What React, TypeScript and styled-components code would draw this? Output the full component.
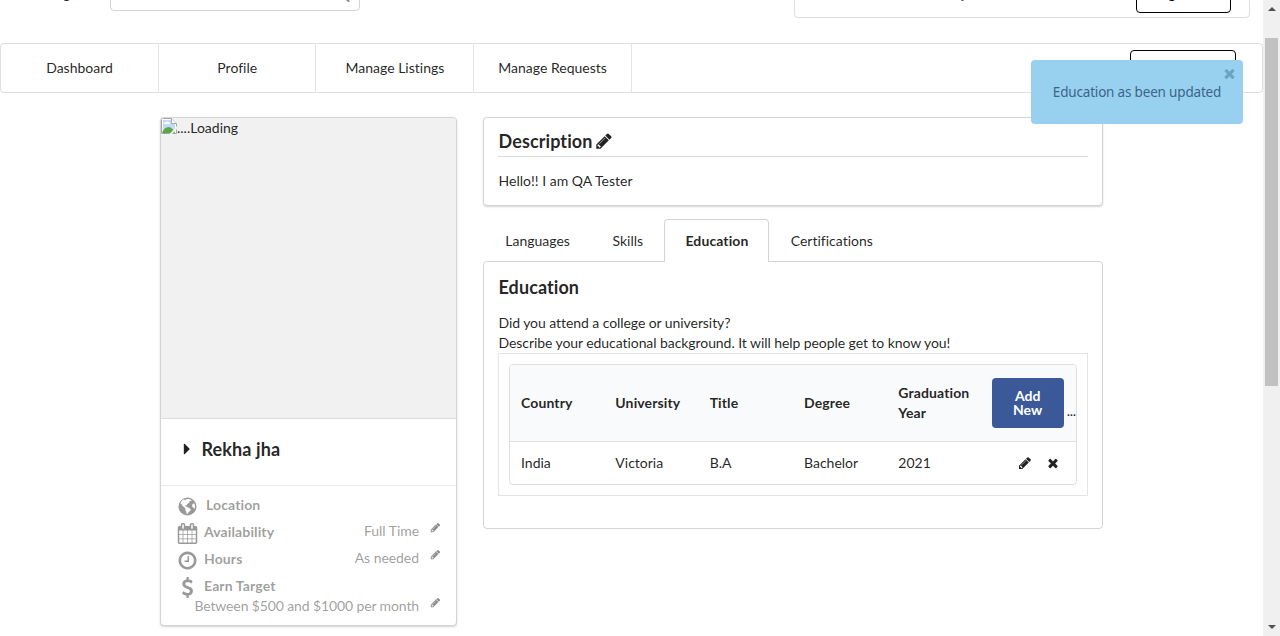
import React from 'react';
import styled, { createGlobalStyle, css } from 'styled-components';

const GlobalStyle = createGlobalStyle`
  *, *::before, *::after { box-sizing: border-box; }
  html, body { margin: 0; height: 100%; overflow: hidden; background: #fff; }
  body {
    font-family: Lato, "Liberation Sans", sans-serif;
    font-size: 14px;
    line-height: 20px;
    font-variant-ligatures: none;
    color: rgba(0, 0, 0, 0.87);
  }
`;

const paths = {
  pencil:
    'M491 1536l91-91-235-235-91 91v107h128v128h107zm523-928q0-22-22-22-10 0-17 7l-542 542q-7 7-7 17 0 22 22 22 10 0 17-7l542-542q7-7 7-17zm-54-192l416 416-832 832h-416v-416zm683 96q0 53-37 90l-166 166-416-416 166-165q36-38 90-38 53 0 91 38l235 234q37 39 37 91z',
  close:
    'M1490 1322q0 40-28 68l-136 136q-28 28-68 28t-68-28l-294-294-294 294q-28 28-68 28t-68-28l-136-136q-28-28-28-68t28-68l294-294-294-294q-28-28-28-68t28-68l136-136q28-28 68-28t68 28l294 294 294-294q28-28 68-28t68 28l136 136q28 28 28 68t-28 68l-294 294 294 294q28 28 28 68z',
  search:
    'M1216 832q0-185-131.5-316.5t-316.5-131.5-316.5 131.5-131.5 316.5 131.5 316.5 316.5 131.5 316.5-131.5 131.5-316.5zm512 832q0 52-38 90t-90 38q-54 0-90-38l-343-342q-179 124-399 124-143 0-273.5-55.5t-225-150-150-225-55.5-273.5 55.5-273.5 150-225 225-150 273.5-55.5 273.5 55.5 225 150 150 225 55.5 273.5q0 220-124 399l343 343q37 37 37 90z',
  calendar:
    'M192 1664h288v-288h-288v288zm352 0h320v-288h-320v288zm-352-352h288v-320h-288v320zm352 0h320v-320h-320v320zm-352-384h288v-288h-288v288zm736 736h320v-288h-320v288zm-384-736h320v-288h-320v288zm768 736h288v-288h-288v288zm-384-352h320v-320h-320v320zm-352-864v-288q0-13-9.5-22.5t-22.5-9.5h-64q-13 0-22.5 9.5t-9.5 22.5v288q0 13 9.5 22.5t22.5 9.5h64q13 0 22.5-9.5t9.5-22.5zm736 864h288v-320h-288v320zm-384-384h320v-288h-320v288zm384 0h288v-288h-288v288zm32-480v-288q0-13-9.5-22.5t-22.5-9.5h-64q-13 0-22.5 9.5t-9.5 22.5v288q0 13 9.5 22.5t22.5 9.5h64q13 0 22.5-9.5t9.5-22.5zm384-64v1280q0 52-38 90t-90 38h-1408q-52 0-90-38t-38-90v-1280q0-52 38-90t90-38h128v-96q0-66 47-113t113-47h64q66 0 113 47t47 113v96h384v-96q0-66 47-113t113-47h64q66 0 113 47t47 113v96h128q52 0 90 38t38 90z',
  clock:
    'M1024 544v448q0 14-9 23t-23 9h-320q-14 0-23-9t-9-23v-64q0-14 9-23t23-9h224v-352q0-14 9-23t23-9h64q14 0 23 9t9 23zm416 352q0-148-73-273t-198-198-273-73-273 73-198 198-73 273 73 273 198 198 273 73 273-73 198-198 73-273zm224 0q0 209-103 385.5t-279.5 279.5-385.5 103-385.5-103-279.5-279.5-103-385.5 103-385.5 279.5-279.5 385.5-103 385.5 103 279.5 279.5 103 385.5z',
  dollar:
    'M1362 1185q0 153-99.5 263.5t-258.5 136.5v175q0 14-9 23t-23 9h-135q-13 0-22.5-9.5t-9.5-22.5v-175q-66-9-127.5-31t-101.5-44.5-74-48-46.5-37.5-17.5-18q-17-21-2-41l103-135q7-10 23-12 15-2 24 9l2 2q113 99 243 125 37 8 74 8 81 0 142.5-43t61.5-122q0-28-15-53t-33.5-42-58.5-37.5-66-32-80-32.5q-39-16-61.5-25t-61.5-26.5-62.5-31-56.5-35.5-53.5-42.5-43.5-49-35.5-58-21-66.5-8.5-78q0-138 98-242t255-134v-180q0-13 9.5-22.5t22.5-9.5h135q14 0 23 9t9 23v176q57 6 110.5 23t87 33.5 63.5 37.5 39 29 15 14q17 18 5 38l-81 146q-8 15-23 16-14 3-27-7-3-3-14.5-12t-39-26.5-58.5-32-74.5-26-85.5-11.5q-95 0-155 43t-60 111q0 26 8.5 48t29.5 41.5 39.5 33 56 31 60.5 27 70 27.5q53 20 81 31.5t76 35 75.5 42.5 62 50 53 63.5 31.5 76.5 13 94z',
  caret:
    'M1152 896q0 26-19 45l-448 448q-19 19-45 19t-45-19-19-45v-896q0-26 19-45t45-19 45 19l448 448q19 19 19 45z',
  globe:
    'M896 128a768 768 0 1 0 0 1536a768 768 0 1 0 0-1536zM1010 250L1180 310L1260 400L1170 440L1110 400L1040 470L1100 540L1010 560L960 640L860 700L850 800L780 770L700 790L710 880L800 880L820 960L920 970L1080 1040L1180 1120L1130 1260L1010 1340L930 1460L900 1540L820 1520L790 1320L700 1200L720 1060L620 960L480 860L400 700L300 620L350 480L480 350L620 270L650 360L760 330L800 250ZM1330 700L1450 610L1530 760L1550 940L1480 1080L1400 1000L1320 940L1280 800Z',
};

type IconName = keyof typeof paths;

const Svg = styled.svg<{ $size: number }>`
  display: block;
  flex: none;
  width: ${(p) => p.$size}px;
  height: ${(p) => p.$size}px;
  fill: currentColor;
`;

const Icon = ({ name, size = 14 }: { name: IconName; size?: number }) => (
  <Svg viewBox="0 0 1792 1792" $size={size} aria-hidden="true">
    <path fillRule="evenodd" d={paths[name]} />
  </Svg>
);

const Screen = styled.div`
  position: relative;
  display: flex;
  width: 1280px;
  height: 636px;
  overflow: hidden;
`;

const Page = styled.div`
  flex: none;
  width: 1263px;
`;

const Header = styled.header`
  display: flex;
  align-items: flex-start;
  height: 43px;
  overflow: hidden;
`;

const Brand = styled.div`
  width: 110px;
  margin-top: -16px;
  padding-left: 14px;
`;

const SearchBox = styled.div`
  display: flex;
  justify-content: flex-end;
  width: 250px;
  height: 38px;
  margin-top: -27px;
  padding: 14px 9px 0 0;
  border: 1px solid rgba(34, 36, 38, 0.2);
  border-radius: 4px;
  color: #888;
`;

const AccountMenu = styled.div`
  display: flex;
  align-items: flex-end;
  justify-content: flex-end;
  width: 456px;
  height: 50px;
  margin: -32px 0 0 434px;
  padding: 0 18px 4px 0;
  border: 1px solid rgba(34, 36, 38, 0.15);
  border-radius: 4px;
`;

const Greeting = styled.span`
  margin: 0 156px 9px 0;
  color: #555;
`;

const OutlineButton = styled.button<{ $width: number }>`
  width: ${(p) => p.$width}px;
  height: 36px;
  padding: 0 0 2px 1px;
  border: 1px solid #000;
  border-radius: 4px;
  background: #fff;
  color: #000;
  font: 400 14px/14px Lato, sans-serif;
`;

const Nav = styled.nav`
  display: flex;
  height: 50px;
  border: 1px solid rgba(34, 36, 38, 0.15);
  border-radius: 4px;
`;

const NavItem = styled.a`
  display: flex;
  align-items: center;
  justify-content: center;
  width: 157.7px;
  padding-left: 0.4px;
  border-right: 1px solid rgba(34, 36, 38, 0.12);
`;

const NavAction = styled.div`
  margin: 6px 26px 0 auto;
`;

const Content = styled.main`
  display: flex;
  align-items: flex-start;
  gap: 26px;
  padding: 24px 0 0 160px;
`;

const panel = css`
  border: 1px solid #d4d4d5;
  border-radius: 4px;
  background: #fff;
`;

const ProfileCard = styled.aside`
  ${panel}
  width: 297px;
  height: 509px;
  overflow: hidden;
  box-shadow: 0 1px 2px 0 #d4d4d5;
`;

const Photo = styled.div`
  display: flex;
  align-items: flex-start;
  height: 301px;
  background: #f1f1f1;
  border-bottom: 1px solid #dcdcdd;
`;

const NameBar = styled.div`
  display: flex;
  align-items: center;
  gap: 6px;
  height: 67px;
  padding: 0 0 7px 16.5px;
  border-bottom: 1px solid #ebebeb;
  font-size: 18px;
  font-weight: 700;
  letter-spacing: 0.1px;
`;

const Details = styled.div`
  padding: 7px 15px 0 16px;
  color: rgba(0, 0, 0, 0.4);
`;

const DetailRow = styled.div`
  display: flex;
  align-items: center;
  height: 27px;
`;

const DetailLabel = styled.strong<{ $gap?: number }>`
  margin: -3px auto 0 ${(p) => p.$gap ?? 6}px;
  letter-spacing: 0.12px;
`;

const DetailValue = styled.span`
  margin-top: -6px;
  letter-spacing: -0.05px;
`;

const EditSlot = styled.span<{ $drop?: number }>`
  margin: ${(p) => -12 + (p.$drop ?? 0)}px 0 0 11px;
  color: rgba(0, 0, 0, 0.45);
`;

const TargetRow = styled.div`
  display: flex;
  align-items: center;
  justify-content: flex-end;
  height: 20px;
  margin-top: -5px;
  letter-spacing: -0.12px;
`;

const Column = styled.section`
  width: 620px;
`;

const DescriptionCard = styled.div`
  ${panel}
  height: 89px;
  padding: 12px 14px 0;
  box-shadow: 0 1px 2px 0 #d4d4d5;
`;

const DescriptionText = styled.div`
  padding-left: 0.5px;
  letter-spacing: 0.02px;
`;

const DescriptionTitle = styled.h3`
  display: flex;
  align-items: center;
  gap: 2px;
  height: 27px;
  margin: 0 0 14px;
  padding: 0 0 4px 0.5px;
  border-bottom: 1px solid #d9d9da;
  font-size: 18px;
  letter-spacing: 0.1px;
`;

const Tabs = styled.div`
  display: flex;
  height: 43px;
  margin: 13px 0 -1px;
  padding-left: 1px;
`;

const Tab = styled.a<{ $active?: boolean }>`
  display: flex;
  align-items: center;
  justify-content: center;
  padding: 0 ${(p) => (p.$active ? 20 : 20.3)}px;
  border: 1px solid ${(p) => (p.$active ? '#d4d4d5' : 'transparent')};
  border-bottom: 0;
  border-radius: 4px 4px 0 0;
  background: ${(p) => (p.$active ? '#fff' : 'transparent')};
  font-weight: ${(p) => (p.$active ? 700 : 400)};
  letter-spacing: ${(p) => (p.$active ? '0.1px' : 'normal')};
`;

const TabPanel = styled.div`
  ${panel}
  height: 268px;
  padding: 14px 14px 0;
`;

const SectionTitle = styled.h3`
  margin: 0 0 15px;
  padding-left: 0.5px;
  font-size: 18px;
  line-height: 22px;
  letter-spacing: 0.08px;
`;

const Prompt = styled.div`
  padding-left: 0.5px;
  letter-spacing: -0.07px;
`;

const TableFrame = styled.div`
  height: 143px;
  padding: 10px;
  border: 1px solid #e4e4e5;
`;

const Table = styled.table`
  width: 568px;
  table-layout: fixed;
  border: 1px solid #dededf;
  border-radius: 4px;
  border-spacing: 0;
  overflow: hidden;
`;

const HeadCell = styled.th`
  height: 77px;
  padding: 0 11px;
  overflow: hidden;
  background: #f9fafb;
  border-bottom: 1px solid #dededf;
  text-align: left;
  letter-spacing: 0.12px;
`;

const ActionHead = styled(HeadCell)`
  padding: 0 0 0 10px;
`;

const HeadActions = styled.div`
  display: flex;
  align-items: center;
  gap: 3px;
`;

const Ellipsis = styled.span`
  margin-top: 16px;
  font-weight: 400;
  letter-spacing: -0.2px;
`;

const Cell = styled.td`
  height: 42px;
  padding: 0 11px;
`;

const AddButton = styled.button`
  flex: none;
  width: 72px;
  height: 50px;
  padding: 1px 18px 1px;
  border: 0;
  border-radius: 4px;
  background: #3b5998;
  color: #fff;
  font: 700 14px/14px Lato, sans-serif;
`;

const RowActions = styled.div`
  display: flex;
  justify-content: flex-end;
  gap: 14px;
  padding-right: 5px;
`;

const Toast = styled.div`
  position: absolute;
  top: 60px;
  left: 1031px;
  display: flex;
  align-items: center;
  justify-content: center;
  width: 212px;
  height: 64px;
  border-radius: 4px;
  background: #98d1f0;
  color: #3c6486;
  font: 13.5px/20px "Noto Sans", sans-serif;
  letter-spacing: -0.18px;
`;

const ToastClose = styled.span`
  position: absolute;
  top: 6px;
  right: 6.5px;
  color: #6ba3c4;
`;

const Scrollbar = styled.div`
  display: flex;
  flex-direction: column;
  align-items: center;
  width: 17px;
  background: #f0f0f0;
`;

const Thumb = styled.div`
  width: 13px;
  height: 348px;
  margin: 27px 0 auto;
  background: #c1c1c1;
`;

const Arrow = styled.div<{ $down?: boolean }>`
  margin: ${(p) => (p.$down ? '0 0 7px' : '7px 0 0')};
  border: 4px solid transparent;
  ${(p) =>
    p.$down
      ? 'border-top-color: #505050; border-bottom: 0;'
      : 'border-bottom-color: #505050; border-top: 0;'}
`;

const BrokenImage = () => (
  <svg width="16" height="16" viewBox="0 0 16 16" aria-hidden="true">
    <path d="M.5 .5h10l5 5v10H.5z" fill="#fff" stroke="#a5a5a5" />
    <path d="M2 2h8v4h4v8H2z" fill="#c3d9f5" />
    <path d="M3 6q0-2 2-2 1-1 2 0 2 0 2 2z" fill="#fff" />
    <path d="M1 15q2-6 7-6 4 1 6 6z" fill="#58a846" />
    <path d="M10.5 .5v5h5" fill="#fff" stroke="#a5a5a5" />
    <path d="M16 8L8.5 16h2.5l5-5z" fill="#f1f1f1" />
  </svg>
);

const navItems = ['Dashboard', 'Profile', 'Manage Listings', 'Manage Requests'];
const tabs = ['Languages', 'Skills', 'Education', 'Certifications'];
const columns = ['Country', 'University', 'Title', 'Degree', 'Graduation Year'];
const education = ['India', 'Victoria', 'B.A', 'Bachelor', '2021'];

const Edit = ({ drop }: { drop?: number }) => (
  <EditSlot $drop={drop}>
    <Icon name="pencil" size={11} />
  </EditSlot>
);

export default function App() {
  return (
    <Screen>
      <GlobalStyle />
      <Page>
        <Header>
          <Brand>Mars Logo</Brand>
          <SearchBox>
            <Icon name="search" />
          </SearchBox>
          <AccountMenu>
            <Greeting>Hi Rekha jha</Greeting>
            <OutlineButton $width={95}>Sign Out</OutlineButton>
          </AccountMenu>
        </Header>
        <Nav>
          {navItems.map((item) => (
            <NavItem key={item}>{item}</NavItem>
          ))}
          <NavAction>
            <OutlineButton $width={106}>Share Skill</OutlineButton>
          </NavAction>
        </Nav>
        <Content>
          <ProfileCard>
            <Photo>
              <BrokenImage />
              <span>....Loading</span>
            </Photo>
            <NameBar>
              <Icon name="caret" size={18} />
              Rekha jha
            </NameBar>
            <Details>
              <DetailRow>
                <Icon name="globe" size={21} />
                <DetailLabel $gap={8}>Location</DetailLabel>
              </DetailRow>
              <DetailRow>
                <Icon name="calendar" size={21} />
                <DetailLabel>Availability</DetailLabel>
                <DetailValue>Full Time</DetailValue>
                <Edit />
              </DetailRow>
              <DetailRow>
                <Icon name="clock" size={21} />
                <DetailLabel>Hours</DetailLabel>
                <DetailValue>As needed</DetailValue>
                <Edit />
              </DetailRow>
              <DetailRow>
                <Icon name="dollar" size={21} />
                <DetailLabel>Earn Target</DetailLabel>
              </DetailRow>
              <TargetRow>
                <span>Between $500 and $1000 per month</span>
                <Edit drop={4} />
              </TargetRow>
            </Details>
          </ProfileCard>
          <Column>
            <DescriptionCard>
              <DescriptionTitle>
                Description
                <Icon name="pencil" size={18} />
              </DescriptionTitle>
              <DescriptionText>Hello!! I am QA Tester</DescriptionText>
            </DescriptionCard>
            <Tabs>
              {tabs.map((tab) => (
                <Tab key={tab} $active={tab === 'Education'}>
                  {tab}
                </Tab>
              ))}
            </Tabs>
            <TabPanel>
              <SectionTitle>Education</SectionTitle>
              <Prompt>Did you attend a college or university?</Prompt>
              <Prompt>
                Describe your educational background. It will help people get to know you!
              </Prompt>
              <TableFrame>
                <Table>
                  <thead>
                    <tr>
                      {columns.map((column) => (
                        <HeadCell key={column}>{column}</HeadCell>
                      ))}
                      <ActionHead>
                        <HeadActions>
                          <AddButton>Add New</AddButton>
                          <Ellipsis>...</Ellipsis>
                        </HeadActions>
                      </ActionHead>
                    </tr>
                  </thead>
                  <tbody>
                    <tr>
                      {education.map((value) => (
                        <Cell key={value}>{value}</Cell>
                      ))}
                      <Cell>
                        <RowActions>
                          <Icon name="pencil" />
                          <Icon name="close" />
                        </RowActions>
                      </Cell>
                    </tr>
                  </tbody>
                </Table>
              </TableFrame>
            </TabPanel>
          </Column>
        </Content>
      </Page>
      <Scrollbar>
        <Arrow />
        <Thumb />
        <Arrow $down />
      </Scrollbar>
      <Toast>
        Education as been updated
        <ToastClose>
          <Icon name="close" size={15} />
        </ToastClose>
      </Toast>
    </Screen>
  );
}
